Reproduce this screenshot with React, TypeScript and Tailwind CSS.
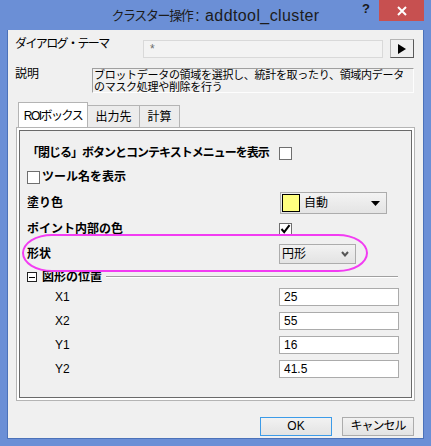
import React from "react";

const font = "font-['Liberation_Sans','Noto_Sans_CJK_JP',sans-serif]";

function CheckBox({ checked }: { checked?: boolean }) {
  return (
    <span className="flex h-[13px] w-[13px] shrink-0 items-center justify-center border border-[#6f6f6f] bg-white">
      {checked && (
        <svg width="11" height="11" viewBox="0 0 11 11">
          <path d="M1.5 5 L4.2 8.2 L9.5 1.2" fill="none" stroke="#000" strokeWidth="2" />
        </svg>
      )}
    </span>
  );
}

function NumField({ value }: { value: string }) {
  return (
    <div className="flex h-[18px] w-[120px] items-center border border-[#ababab] bg-white pl-[4px] text-[12px] text-black">
      {value}
    </div>
  );
}

function Row({
  h,
  mt,
  label,
  children,
}: {
  h: number;
  mt: string;
  label: React.ReactNode;
  children?: React.ReactNode;
}) {
  return (
    <div className={`grid grid-cols-[252px_1fr] items-center ${mt}`} style={{ height: h }}>
      <div className="flex items-center">{label}</div>
      <div className="flex items-center">{children}</div>
    </div>
  );
}

export default function App() {
  return (
    <div className={`flex h-[446px] w-[431px] flex-col bg-[#6b8fd6] px-[7px] pb-[7px] ${font}`}>
      {/* title bar */}
      <div className="-mx-[7px] grid h-[30px] grid-cols-[1fr_auto_1fr]">
        <div />
        <div className="flex items-center pt-[1px] text-[#1c1c1c]">
          <span className="text-[13px] tracking-[-1.4px]">クラスター操作</span>
          <span className="pl-[3px] text-[16px] tracking-[0.4px]">: addtool_cluster</span>
        </div>
        <div className="flex items-start justify-end pr-[7px]">
          <div className="flex h-[21px] w-[26px] items-center justify-center pb-[3px] text-[13px] font-bold text-[#1a1a1a]">
            ?
          </div>
          <div className="flex h-[21px] w-[45px] items-center justify-center bg-[#c75050]">
            <svg width="10" height="10" viewBox="0 0 10 10">
              <path d="M1 1 L9 9 M9 1 L1 9" stroke="#fff" strokeWidth="2" />
            </svg>
          </div>
        </div>
      </div>

      {/* client area */}
      <div className="flex flex-1 flex-col border-x border-b border-[#4c72b9] bg-[#f0f0f0] text-[12px] text-black">
        {/* theme row */}
        <div className="mt-[9px] flex h-[19px] pl-[7px]">
          <div className="-mt-[3px] w-[128px] leading-[16px] tracking-[-1.6px]">ダイアログ・テーマ</div>
          <div className="mt-[1px] flex h-[18px] w-[240px] items-center border border-[#d9d9d9] bg-[#f3f3f3] pl-[6px] text-[#6d6d6d]">
            *
          </div>
          <div className="ml-[7px] flex h-[19px] w-[24px] items-center justify-center border border-t-[#b5b5b5] border-l-[#b5b5b5] border-r-[#5a5a5a] border-b-[#5a5a5a] bg-[#f0f0f0]">
            <svg width="8" height="10" viewBox="0 0 8 10">
              <polygon points="0,0 8,5 0,10" fill="#000" />
            </svg>
          </div>
        </div>

        {/* description row */}
        <div className="mt-[10px] flex h-[25px] pl-[7px]">
          <div className="-mt-[2px] w-[77px] leading-[16px]">説明</div>
          <div className="h-[25px] w-[322px] border border-t-[#a0a0a0] border-l-[#a0a0a0] border-r-[#fdfdfd] border-b-[#fdfdfd] pl-[1px] text-[11px] leading-[12px] tracking-[-0.3px]">
            <div>ブロットデータの領域を選択し、統計を取ったり、領域内データ</div>
            <div>のマスク処理や削除を行う</div>
          </div>
        </div>

        {/* tabs */}
        <div className="mt-[9px] flex h-[25px] items-end pl-[10px]">
          <div className="flex h-[25px] w-[70px] items-center justify-center border-x border-t border-[#b4b4b4] bg-white pt-[1px] tracking-[-1.5px]">
            ROIボックス
          </div>
          <div className="flex h-[22px] w-[52px] items-center justify-center border-r border-t border-[#b4b4b4] bg-[#ececec]">
            出力先
          </div>
          <div className="flex h-[22px] w-[40px] items-center justify-center border-r border-t border-[#b4b4b4] bg-[#ececec]">
            計算
          </div>
        </div>

        {/* tab panel */}
        <div className="ml-[8px] h-[274px] w-[399px] border border-[#b4b4b4] bg-white p-[2px]">
          <div className="relative flex h-full flex-col border border-[#6a6a6a] bg-[#f0f0f0] pl-[7px] pt-[13px]">
            <Row h={18} mt="" label={<span className="font-bold tracking-[-1px]">「閉じる」ボタンとコンテキストメニューを表示</span>}>
              <CheckBox />
            </Row>
            <div className="mt-[5px] flex h-[20px] items-center">
              <CheckBox />
              <span className="ml-[2px] font-bold">ツール名を表示</span>
            </div>
            <Row h={22} mt="mt-[5px]" label={<span className="font-bold">塗り色</span>}>
              <div className="ml-[1px] flex h-[22px] w-[107px] items-center border border-[#acacac] bg-gradient-to-b from-[#f3f3f3] to-[#e4e4e4] pl-[1px]">
                <span className="h-[18px] w-[18px] border border-black bg-[#ffff80]" />
                <span className="ml-[4px] flex-1">自動</span>
                <svg width="9" height="5" viewBox="0 0 9 5" className="mr-[6px]">
                  <polygon points="0,0 9,0 4.5,5" fill="#000" />
                </svg>
              </div>
            </Row>
            <Row h={20} mt="mt-[5px]" label={<span className="font-bold">ポイント内部の色</span>}>
              <CheckBox checked />
            </Row>
            <Row h={20} mt="mt-[5px]" label={<span className="font-bold">形状</span>}>
              <div className="flex h-[20px] w-[77px] items-center border border-[#acacac] bg-gradient-to-b from-[#f2f2f2] to-[#e3e3e3] pl-[2px]">
                <span className="flex-1">円形</span>
                <svg width="8" height="6" viewBox="0 0 8 6" className="mr-[6px]">
                  <path d="M1 1 L4 4.5 L7 1" fill="none" stroke="#555" strokeWidth="2" />
                </svg>
              </div>
            </Row>
            <div className="mt-[4px] flex h-[18px] items-center pr-[13px]">
              <span className="flex h-[10px] w-[10px] items-center justify-center border border-[#222] bg-white">
                <span className="h-[1px] w-[6px] bg-black" />
              </span>
              <span className="ml-[5px] font-bold">図形の位置</span>
              <span className="ml-[4px] h-[2px] flex-1 border-t border-b border-t-[#a0a0a0] border-b-white" />
            </div>
            <Row h={18} mt="mt-[2px]" label={<span className="pl-[28px]">X1</span>}>
              <NumField value="25" />
            </Row>
            <Row h={18} mt="mt-[6px]" label={<span className="pl-[28px]">X2</span>}>
              <NumField value="55" />
            </Row>
            <Row h={18} mt="mt-[6px]" label={<span className="pl-[28px]">Y1</span>}>
              <NumField value="16" />
            </Row>
            <Row h={18} mt="mt-[6px]" label={<span className="pl-[28px]">Y2</span>}>
              <NumField value="41.5" />
            </Row>

            {/* highlight ring drawn over the shape row */}
            <div className="pointer-events-none absolute left-[2px] top-[103px] h-[38px] w-[346px] rounded-[30px/19px] border-2 border-[#f23cf2]" />
          </div>
        </div>

        {/* buttons */}
        <div className="mt-[16px] flex justify-end gap-[10px] pr-[9px]">
          <button className="h-[19px] w-[72px] border border-[#3c9be8] bg-gradient-to-b from-[#f2f2f2] to-[#e3e3e3] leading-[17px]">
            OK
          </button>
          <button className="h-[19px] w-[72px] border border-[#acacac] bg-gradient-to-b from-[#f2f2f2] to-[#e3e3e3] leading-[17px] tracking-[-1px]">
            キャンセル
          </button>
        </div>
      </div>
    </div>
  );
}
